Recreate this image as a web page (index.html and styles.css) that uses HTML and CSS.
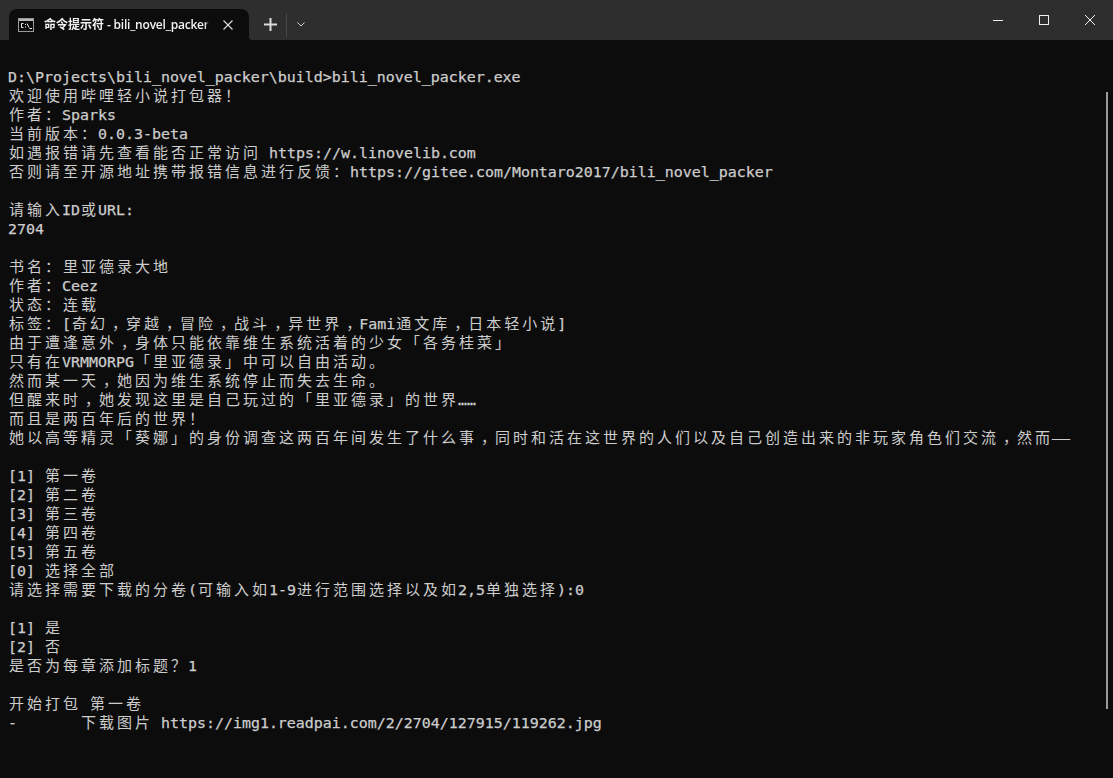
FILE: index.html
```html
<!DOCTYPE html>
<html lang="zh-CN">
<head>
<meta charset="utf-8">
<title>命令提示符</title>
<link rel="stylesheet" href="styles.css">
</head>
<body>
<div class="window">
  <header class="titlebar">
    <div class="tab">
      <svg class="tab-icon" width="16" height="14" viewBox="0 0 16 14"><rect x="0.5" y="0.5" width="15" height="13" fill="#0c0c0c" stroke="#9a9a9a"/><rect x="1" y="1" width="14" height="2" fill="#b8b8b8"/><path d="M5.500 5.500H3.500V9.500H5.500M7.500 6V7M7.500 8.500V9.500M9 5.500L11 9.500M11.500 10.500H14" fill="none" stroke="#e8e8e8"/></svg>
      <span class="tab-title"><span class="tab-cjk">命令提示符</span> - bili_novel_packer.exe</span>
      <svg class="tab-close" width="10" height="10" viewBox="0 0 10 10"><path d="M0.500 0.500L9.500 9.500M9.500 0.500L0.500 9.500" stroke="#e0e0e0" stroke-width="1.100"/></svg>
    </div>
    <div class="tab-actions">
      <svg class="new-tab" width="13" height="13" viewBox="0 0 13 13"><path d="M6.500 0V13M0 6.500H13" stroke="#dcdcdc" stroke-width="2"/></svg>
      <span class="divider"></span>
      <svg class="dropdown" width="8" height="5" viewBox="0 0 8 5"><path d="M0.500 0.500L4 4L7.500 0.500" fill="none" stroke="#d0d0d0"/></svg>
    </div>
    <div class="window-controls">
      <span class="ctrl"><svg width="10" height="1" viewBox="0 0 10 1"><rect width="10" height="1" fill="#f0f0f0"/></svg></span>
      <span class="ctrl"><svg width="10" height="10" viewBox="0 0 10 10"><rect x="0.500" y="0.500" width="9" height="9" fill="none" stroke="#f0f0f0"/></svg></span>
      <span class="ctrl"><svg width="10" height="10" viewBox="0 0 10 10"><path d="M0 0L10 10M10 0L0 10" stroke="#f0f0f0" stroke-width="1"/></svg></span>
    </div>
  </header>
  <main class="terminal">
<pre class="output">

D:\Projects\bili_novel_packer\build&gt;bili_novel_packer.exe
<i>欢迎使用哔哩轻小说打包器！</i>
<i>作者：</i>Sparks
<i>当前版本：</i>0.0.3-beta
<i>如遇报错请先查看能否正常访问</i> https://w.linovelib.com
<i>否则请至开源地址携带报错信息进行反馈：</i>https://gitee.com/Montaro2017/bili_novel_packer

<i>请输入</i>ID<i>或</i>URL:
2704

<i>书名：里亚德录大地</i>
<i>作者：</i>Ceez
<i>状态：连载</i>
<i>标签：</i>[<i>奇幻<b>，</b>穿越<b>，</b>冒险<b>，</b>战斗<b>，</b>异世界<b>，</b></i>Fami<i>通文库<b>，</b>日本轻小说</i>]
<i>由于遭逢意外<b>，</b>身体只能依靠维生系统活着的少女「各务桂菜」</i>
<i>只有在</i>VRMMORPG<i>「里亚德录」中可以自由活动。</i>
<i>然而某一天<b>，</b>她因为维生系统停止而失去生命。</i>
<i>但醒来时<b>，</b>她发现这里是自己玩过的「里亚德录」的世界</i>……
<i>而且是两百年后的世界！</i>
<i>她以高等精灵「葵娜」的身份调查这两百年间发生了什么事<b>，</b>同时和活在这世界的人们以及自己创造出来的非玩家角色们交流<b>，</b>然而</i>——

[1] <i>第一卷</i>
[2] <i>第二卷</i>
[3] <i>第三卷</i>
[4] <i>第四卷</i>
[5] <i>第五卷</i>
[0] <i>选择全部</i>
<i>请选择需要下载的分卷</i>(<i>可输入如</i>1-9<i>进行范围选择以及如</i>2,5<i>单独选择</i>):0

[1] <i>是</i>
[2] <i>否</i>
<i>是否为每章添加标题？</i>1

<i>开始打包</i> <i>第一卷</i>
-       <i>下载图片</i> https://img1.readpai.com/2/2704/127915/119262.jpg
</pre>
    <div class="scrollbar"></div>
  </main>
</div>
</body>
</html>
```
FILE: styles.css
```css
* { box-sizing: border-box; }
html, body { margin: 0; height: 100%; }
body { overflow: hidden; background: #0c0c0c; }
.window { display: flex; flex-direction: column; height: 100vh; }
.titlebar { display: flex; align-items: flex-end; height: 40px; flex: none; background: #2e2e2e; padding-left: 9px; }
.tab { position: relative; display: flex; align-items: center; width: 240px; height: 31px; background: #0c0c0c; border-radius: 8px 8px 0 0; padding-left: 9px; padding-right: 15px; }
.tab::after { content: ""; position: absolute; right: -4px; bottom: 0; width: 4px; height: 4px; background: radial-gradient(circle at 100% 0, transparent 4px, #0c0c0c 4.5px); }
.tab-icon { flex: none; }
.tab-title { flex: none; margin-left: 10px; overflow: hidden; white-space: nowrap; width: 165px; font: 600 12px/16px "Open Sans", "Noto Sans CJK SC", sans-serif; color: #f2f2f2; letter-spacing: -0.2px; -webkit-mask-image: linear-gradient(to right, #000 161px, transparent 165px); mask-image: linear-gradient(to right, #000 161px, transparent 165px); }
.tab-cjk { letter-spacing: 0; }
.tab-close { flex: none; margin-left: 14px; }
.tab-actions { display: flex; align-items: center; height: 31px; }
.new-tab { margin-left: 15px; }
.divider { width: 1px; height: 24px; margin-left: 9px; background: #484848; }
.dropdown { margin-left: 10px; }
.window-controls { display: flex; align-items: center; margin-left: auto; height: 40px; align-self: flex-start; }
.ctrl { display: flex; align-items: center; justify-content: center; width: 46px; height: 40px; }
.terminal { position: relative; flex: 1; padding: 9px 8px 0; overflow: hidden; background: #0c0c0c; }
.output { margin: 0; color: #cccccc; font: 14.95px/19px "DejaVu Sans Mono", monospace; white-space: pre; -webkit-text-stroke: 0.25px #cccccc; }
.output i { font-family: "Noto Sans CJK SC", sans-serif; font-style: normal; font-size: 15px; line-height: 0; letter-spacing: 3px; position: relative; left: 1px; -webkit-text-stroke: 0; }
.output b { font-weight: 400; margin-left: 4px; margin-right: -4px; }
.scrollbar { position: absolute; top: 52px; left: 1106px; width: 2px; height: 617px; background: #9a9a9a; }
```
